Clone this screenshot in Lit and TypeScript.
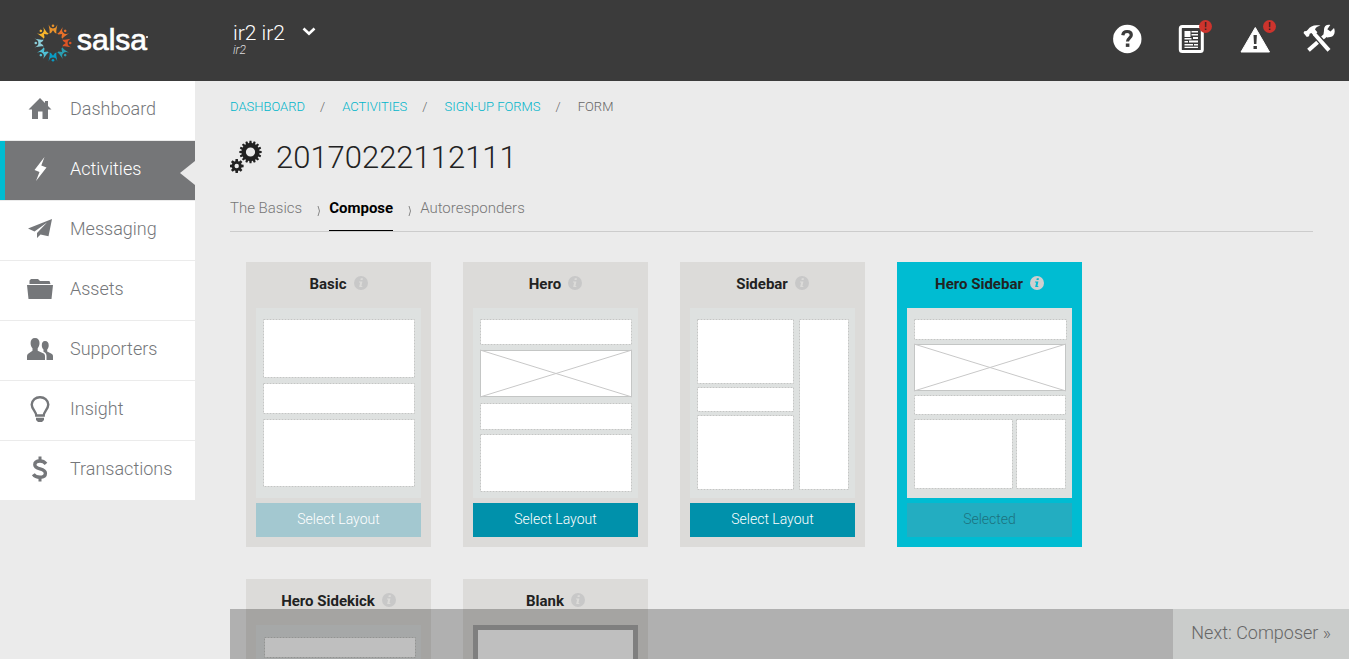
import { LitElement, html, css, svg } from "lit";
import { customElement, property } from "lit/decorators.js";
import { classMap } from "lit/directives/class-map.js";

type Box = { x: number; y: number; w: number; h: number; image?: boolean };

interface LayoutOption {
  name: string;
  state: "available" | "dimmed" | "selected";
  blank?: boolean;
  boxes: Box[];
}

const LAYOUTS: LayoutOption[] = [
  {
    name: "Basic",
    state: "dimmed",
    boxes: [
      { x: 7, y: 11, w: 152, h: 59 },
      { x: 7, y: 75, w: 152, h: 31 },
      { x: 7, y: 111, w: 152, h: 68 },
    ],
  },
  {
    name: "Hero",
    state: "available",
    boxes: [
      { x: 7, y: 11, w: 152, h: 26 },
      { x: 7, y: 42, w: 152, h: 47, image: true },
      { x: 7, y: 95, w: 152, h: 27 },
      { x: 7, y: 126, w: 152, h: 58 },
    ],
  },
  {
    name: "Sidebar",
    state: "available",
    boxes: [
      { x: 7, y: 11, w: 97, h: 65 },
      { x: 7, y: 79, w: 97, h: 25 },
      { x: 7, y: 107, w: 97, h: 75 },
      { x: 109, y: 11, w: 50, h: 171 },
    ],
  },
  {
    name: "Hero Sidebar",
    state: "selected",
    boxes: [
      { x: 7, y: 11, w: 153, h: 21 },
      { x: 7, y: 36, w: 152, h: 47, image: true },
      { x: 7, y: 87, w: 152, h: 20 },
      { x: 7, y: 111, w: 99, h: 70 },
      { x: 109, y: 111, w: 50, h: 70 },
    ],
  },
  {
    name: "Hero Sidekick",
    state: "available",
    boxes: [
      { x: 8, y: 12, w: 152, h: 21 },
      { x: 8, y: 37, w: 152, h: 47, image: true },
      { x: 8, y: 88, w: 152, h: 94 },
    ],
  },
  { name: "Blank", state: "available", blank: true, boxes: [] },
];

const NAV_ICONS: Record<string, unknown> = {
  Dashboard: svg`<path d="M14 3 2.500 14.500H6V24h6v-7.500h4.500V24H22v-9.500h3.500L22 11V6h-3v2z"/>`,
  Activities: svg`<path d="M18.500 2 8.500 15l5 2L10 26l10.500-13.500-5.200-2z"/>`,
  Messaging: svg`<path d="M26 4 2 13.500l6.500 3L21 7.500 11 18v5l3.500-3.500 8 1.800zM22 9l-7 9 6 1.500z"/>`,
  Assets: svg`<path d="M3.500 9V5.500L5 4h7l2 2h9.500l1 3zM1 10h26l-1.500 14h-23z"/>`,
  Supporters: svg`<path d="M9 3c3 0 4.500 2 4.500 5 0 2.500-.8 4-1.800 5.200v2.500l6 2.800c1 .6 1.300 1.500 1.300 3V25H1v-3.500c0-1.500.5-2.400 1.500-3l4-2.800v-2.500C5.300 12 4.600 10.500 4.600 8c0-3 1.400-5 4.400-5z"/><path d="M19 6c2.600 0 3.700 1.800 3.700 4.200 0 2-.7 3.300-1.500 4.300v2l4.300 2.300c1 .6 1.500 1.400 1.500 2.700V25h-6.500v-4c0-2-.8-3.200-3-4.300v-2.200c-1-1-1.700-2.300-1.700-4.300C15.800 7.800 16.800 6 19 6z"/>`,
  Insight: svg`<path fill="none" stroke="currentColor" stroke-width="2.400" d="M10.300 20.500c0-3.500-4.600-6.500-4.600-11A8 8 0 0 1 14 2.200a8 8 0 0 1 8.300 7.300c0 4.500-4.600 7.500-4.600 11z"/><path d="M10 22.800h8V25l-2 2h-4l-2-2z"/>`,
  Transactions: svg`<path fill="none" stroke="currentColor" stroke-width="3.400" d="M20 8.800C18.500 7 16.500 6 14 6c-3.200 0-5.200 1.500-5.200 3.800 0 5.400 10.600 2.800 10.600 8.400 0 2.500-2.200 4-5.400 4-3 0-5.300-1-6.700-3"/><path d="M12.500 1.500h3V6h-3zM12.500 22h3v4.500h-3z"/>`,
};

const gear = (cx: number, cy: number, teeth: number, outer: number, inner: number, hole: number) => {
  const points: string[] = [];
  const step = (Math.PI * 2) / teeth;
  for (let i = 0; i < teeth; i++) {
    for (const [offset, r] of [[-0.36, inner], [-0.22, outer], [0.22, outer], [0.36, inner]]) {
      const a = (i + offset) * step;
      points.push(`${(cx + Math.cos(a) * r).toFixed(2)} ${(cy + Math.sin(a) * r).toFixed(2)}`);
    }
  }
  const ring = `M${cx - hole} ${cy}a${hole} ${hole} 0 1 0 ${hole * 2} 0a${hole} ${hole} 0 1 0 ${-hole * 2} 0z`;
  return svg`<path fill-rule="evenodd" d=${`M${points.join("L")}z${ring}`}/>`;
};

@customElement("salsa-logo")
export class SalsaLogo extends LitElement {
  static styles = css`
    :host { display: flex; align-items: center; gap: 4px; color: #fff; }
    .ring { width: 40px; height: 42px; display: block; }
    .word {
      font: 30px/40px "Liberation Sans", Arial, sans-serif;
      -webkit-text-stroke: 0.7px #fff;
      margin-top: -6px;
    }
    .dot { width: 2px; height: 2px; border-radius: 50%; background: #fff; margin: -12px 0 0 -5px; }
  `;
  render() {
    const colours = ["#e9922b", "#e8702a", "#dc5426", "#2a9db0", "#0a9cc4", "#4fc0d5", "#8ccdd8", "#f7b52c"];
    return html`
      <svg class="ring" viewBox="-20 -20 40 40" aria-hidden="true">
        ${colours.map(
          (c, i) => svg`<g transform=${`rotate(${i * 45})`} fill=${c}>
            <path d="M-4.200-18.500C-3.600-16.200-2.500-14.600 0-14.600S3.600-16.200 4.200-18.500C4.300-15 2.800-13.500 3.500-9.500L2-10 0-12.800-2-10-3.500-9.500C-2.800-13.500-4.300-15-4.200-18.500z"/>
            <circle cy="-17.200" r="1.300"/>
          </g>`
        )}
      </svg>
      <span class="word">salsa</span><span class="dot"></span>
    `;
  }
}

@customElement("app-header")
export class AppHeader extends LitElement {
  static styles = css`
    :host {
      display: flex;
      align-items: flex-start;
      height: 81px;
      box-sizing: border-box;
      background: #3b3b3b;
      color: #fff;
      padding: 22px 14px 0 33px;
    }
    .brand { width: 200px; }
    .account {
      display: flex;
      gap: 17px;
      align-items: flex-start;
      padding: 0;
      border: 0;
      background: none;
      color: inherit;
      font: inherit;
      text-align: left;
      cursor: pointer;
    }
    .names { display: flex; flex-direction: column; }
    .user { font-size: 21px; line-height: 22px; }
    .org { font-size: 12px; line-height: 12px; font-style: italic; color: #ddd; }
    .chevron { width: 14px; height: 14px; margin-top: 2px; }
    .tools { display: flex; gap: 32px; margin-left: auto; }
    .tool {
      position: relative;
      display: block;
      width: 32px;
      height: 34px;
      padding: 0;
      border: 0;
      background: none;
      color: #fff;
      cursor: pointer;
    }
    .tool svg { display: block; width: 32px; height: 34px; }
    .alert {
      position: absolute;
      top: -2px;
      right: -5px;
      width: 13px;
      height: 13px;
      border-radius: 50%;
      background: #cd342d;
      color: #3b2020;
      font-size: 10px;
      line-height: 13px;
      font-weight: 700;
      text-align: center;
    }
  `;
  render() {
    return html`
      <salsa-logo class="brand"></salsa-logo>
      <button class="account" type="button">
        <span class="names"><span class="user">ir2 ir2</span><span class="org">ir2</span></span>
        <svg class="chevron" viewBox="0 0 14 14" aria-hidden="true">
          <path d="M1.500 4.500 7 9.800l5.500-5.300" fill="none" stroke="#fff" stroke-width="2.600" />
        </svg>
      </button>
      <div class="tools">
        <button class="tool" type="button" aria-label="Help">
          <svg viewBox="0 0 32 34">
            <circle cx="16.300" cy="17" r="14.200" fill="#fff" />
            <path d="M11.800 13.200c.3-2.400 1.900-3.700 4.300-3.700 2.500 0 4.200 1.400 4.200 3.500 0 3-3.800 3.300-3.800 6.500" fill="none" stroke="#3b3b3b" stroke-width="3.200" />
            <path d="M14.800 21.500h3.600v3.400h-3.600z" fill="#3b3b3b" />
          </svg>
        </button>
        <button class="tool" type="button" aria-label="News">
          <svg viewBox="0 0 32 34">
            <rect x="5.300" y="4.500" width="22" height="25" rx="2" fill="none" stroke="#fff" stroke-width="3" />
            <path fill="#fff" d="M9.500 9h6v6h-6zM16.500 9H23v1.500h-6.500zM16.500 12H23v1.500h-6.500zM9.500 16h7v1.500h-7zM18 15h5v2h-5zM9.500 19H13v1.500H9.500zM14 18.500h9v2h-9zM9.500 22H18v1.500H9.500zM19 22h4v1.500h-4zM9.500 24.800H23V26H9.500z" />
          </svg>
          <span class="alert">!</span>
        </button>
        <button class="tool" type="button" aria-label="Alerts">
          <svg viewBox="0 0 32 34">
            <path d="M16.300 5.500 2 30h28.500z" fill="#fff" stroke="#fff" stroke-linejoin="round" />
            <path d="M14.500 13h3.400l-.5 9H15zM14.500 24h3.400v3h-3.400z" fill="#3b3b3b" />
          </svg>
          <span class="alert">!</span>
        </button>
        <button class="tool" type="button" aria-label="Settings">
          <svg viewBox="0 0 32 34">
            <path d="M5.500 28.300 24 12" stroke="#fff" stroke-width="4" fill="none" />
            <path d="M31 6 27.500 9.500l-3.200-2.200 3-4.300c-4-.8-6.700 1.600-6.300 5.700l-.5 3.500 3.600 3.400 3.300-.6c3.600-.3 5.400-4.200 3.600-9z" fill="#fff" />
            <path d="M13.300 14 26 28" stroke="#3b3b3b" stroke-width="6.500" fill="none" />
            <path d="M11.500 12 26 28.300" stroke="#fff" stroke-width="4" fill="none" />
            <path d="M17.500 3.500C11 2.500 7.500 4 4.800 7.700L3.500 9 1.300 9.300 .5 11l3.300 4 2.200-.8.700-2.400 1.700-.8 2.400 2.800 3.600-3.500-2.400-2.900c.8-1.900 2.500-3 5.500-3.900z" fill="#fff" />
          </svg>
        </button>
      </div>
    `;
  }
}

@customElement("side-nav")
export class SideNav extends LitElement {
  @property() current = "Activities";

  static styles = css`
    :host { display: block; width: 195px; flex: none; }
    .list { list-style: none; margin: 0; padding: 0; background: #fff; }
    .item { border-bottom: 1px solid #ebebeb; }
    .item:last-child { border-bottom: 0; }
    .link {
      position: relative;
      display: flex;
      align-items: center;
      gap: 16px;
      height: 59px;
      box-sizing: border-box;
      padding: 0 0 4px 26px;
      font-size: 18px;
      color: #75777a;
      text-decoration: none;
    }
    .icon { width: 28px; height: 28px; fill: currentColor; }
    .link.active {
      background: #757678;
      color: #fff;
      border-left: 5px solid #00bcd2;
      padding-left: 21px;
    }
    .link.active::after {
      content: "";
      position: absolute;
      right: 0;
      top: 20px;
      border: solid transparent;
      border-width: 12px 15px 12px 0;
      border-right-color: #ebebeb;
    }
  `;
  render() {
    return html`<nav>
      <ul class="list">
        ${Object.entries(NAV_ICONS).map(
          ([name, icon]) => html`<li class="item">
            <a href="#" class=${classMap({ link: true, active: name === this.current })}>
              <svg class="icon" viewBox="0 0 28 28" aria-hidden="true">${icon}</svg>
              <span>${name}</span>
            </a>
          </li>`
        )}
      </ul>
    </nav>`;
  }
}

@customElement("layout-card")
export class LayoutCard extends LitElement {
  @property({ attribute: false }) option!: LayoutOption;

  static styles = css`
    :host { display: block; }
    .card { background: #dcdbd9; padding: 0 10px 10px; }
    .title {
      display: flex;
      justify-content: center;
      align-items: center;
      gap: 7px;
      height: 46px;
      margin: 0;
      padding-bottom: 2px;
      box-sizing: border-box;
      font-size: 15px;
      font-weight: 700;
      color: #222;
    }
    .info { width: 14px; height: 14px; flex: none; margin-bottom: 2px; }
    .preview { display: block; width: 100%; height: 190px; background: #dee1e0; margin-bottom: 5px; }
    .blank { background: #fff; border: 5px solid #aaa; box-sizing: border-box; }
    .choose {
      display: block;
      width: 100%;
      height: 34px;
      padding: 0 0 2px;
      border: 0;
      background: #0091ab;
      color: #fff;
      font: inherit;
      font-size: 14px;
      cursor: pointer;
    }
    .dimmed .choose { background: #a3c8d0; }
    .selected { background: #00bcd2; }
    .selected .choose { background: #23adc1; color: #1c727e; }
  `;
  render() {
    const o = this.option;
    const selected = o.state === "selected";
    const mark = selected ? "#00bcd2" : "#dcdbd9";
    const disc = selected ? "#cfcfcf" : "#c8c8c8";
    return html`<section class=${classMap({ card: true, [o.state]: true })}>
      <h2 class="title">
        <span>${o.name}</span>
        <svg class="info" viewBox="0 0 13 13" aria-hidden="true">
          <circle cx="6.500" cy="6.500" r="6.500" fill=${disc} />
          <path d="M6.300 2.200h2l-.3 1.600H6zM4.700 5h3.100l-.9 4.300h.9l-.2 1H4.800L5.700 6H4.500z" fill=${mark} />
        </svg>
      </h2>
      <svg class=${classMap({ preview: true, blank: !!o.blank })} viewBox="0 0 165 190" aria-hidden="true">
        ${o.boxes.map(
          (b) => svg`
            <rect x=${b.x + 0.5} y=${b.y + 0.5} width=${b.w - 1} height=${b.h - 1} fill="#fff"
              stroke="#c4c6c5" stroke-dasharray=${b.image ? "none" : "2 1"} />
            ${b.image
              ? svg`<path d=${`M${b.x} ${b.y}l${b.w} ${b.h}M${b.x + b.w} ${b.y}l${-b.w} ${b.h}`} stroke="#c8c8c8" />`
              : null}`
        )}
      </svg>
      <button class="choose" type="button" aria-pressed=${selected ? "true" : "false"}>
        ${selected ? "Selected" : "Select Layout"}
      </button>
    </section>`;
  }
}

@customElement("app-root")
export class AppRoot extends LitElement {
  static styles = css`
    :host {
      display: flex;
      flex-direction: column;
      height: 100vh;
      overflow: hidden;
      background: #ebebeb;
      font-family: Roboto, sans-serif;
      font-weight: 300;
      color: #222;
    }
    .body { display: flex; flex: 1; min-height: 0; }
    .main { flex: 1; min-width: 0; overflow: hidden; padding: 16px 36px 0 35px; }
    .crumbs { display: flex; font-size: 13px; line-height: 20px; color: #666; text-transform: uppercase; }
    .crumb { color: #00b5ca; text-decoration: none; }
    .slash { padding: 0 17px 0 15px; }
    .heading { display: flex; align-items: center; gap: 14px; margin-top: 18px; }
    .gears { width: 32px; height: 36px; fill: #222; }
    .title { margin: 0; padding-top: 3px; font-size: 31px; line-height: 40px; font-weight: 300; }
    .steps {
      display: flex;
      height: 54px;
      box-sizing: border-box;
      border-bottom: 1px solid #ccc;
      font-size: 15px;
      line-height: 20px;
    }
    .step { color: #777; text-decoration: none; padding-top: 20px; height: 34px; box-sizing: border-box; }
    .step.active { color: #000; font-weight: 700; height: 53px; border-bottom: 1px solid #000; }
    .sep { width: 6px; height: 12px; margin: 27px 7px 0 14px; fill: none; stroke: #888; }
    .grid {
      display: grid;
      grid-template-columns: repeat(auto-fill, 185px);
      gap: 32px;
      padding: 30px 16px 80px;
    }
    .bar {
      position: fixed;
      left: 230px;
      right: 0;
      bottom: 0;
      display: flex;
      justify-content: flex-end;
      height: 50px;
      background: rgba(0, 0, 0, 0.25);
    }
    .next {
      border: 0;
      padding: 0 18px 4px;
      background: #cacccb;
      color: #666;
      font: inherit;
      font-size: 18px;
      cursor: pointer;
    }
  `;

  private separator() {
    return html`<svg class="sep" viewBox="0 0 6 12" aria-hidden="true"><path d="M2 1q3 5 0 10" /></svg>`;
  }

  render() {
    return html`
      <app-header></app-header>
      <div class="body">
        <side-nav></side-nav>
        <main class="main">
          <nav class="crumbs" aria-label="Breadcrumb">
            ${["Dashboard", "Activities", "Sign-up Forms"].map(
              (c) => html`<a class="crumb" href="#">${c}</a><span class="slash">/</span>`
            )}
            <span>Form</span>
          </nav>
          <div class="heading">
            <svg class="gears" viewBox="0 0 32 36" aria-hidden="true">
              ${gear(20.5, 13, 16, 11.2, 9, 4.6)} ${gear(6.7, 27, 8, 7, 5, 2.2)}
            </svg>
            <h1 class="title">20170222112111</h1>
          </div>
          <nav class="steps" aria-label="Steps">
            <a class="step" href="#">The Basics</a>${this.separator()}
            <a class="step active" href="#">Compose</a>${this.separator()}
            <a class="step" href="#">Autoresponders</a>
          </nav>
          <div class="grid">
            ${LAYOUTS.map((o) => html`<layout-card .option=${o}></layout-card>`)}
          </div>
        </main>
      </div>
      <div class="bar"><button class="next" type="button">Next: Composer »</button></div>
    `;
  }
}
